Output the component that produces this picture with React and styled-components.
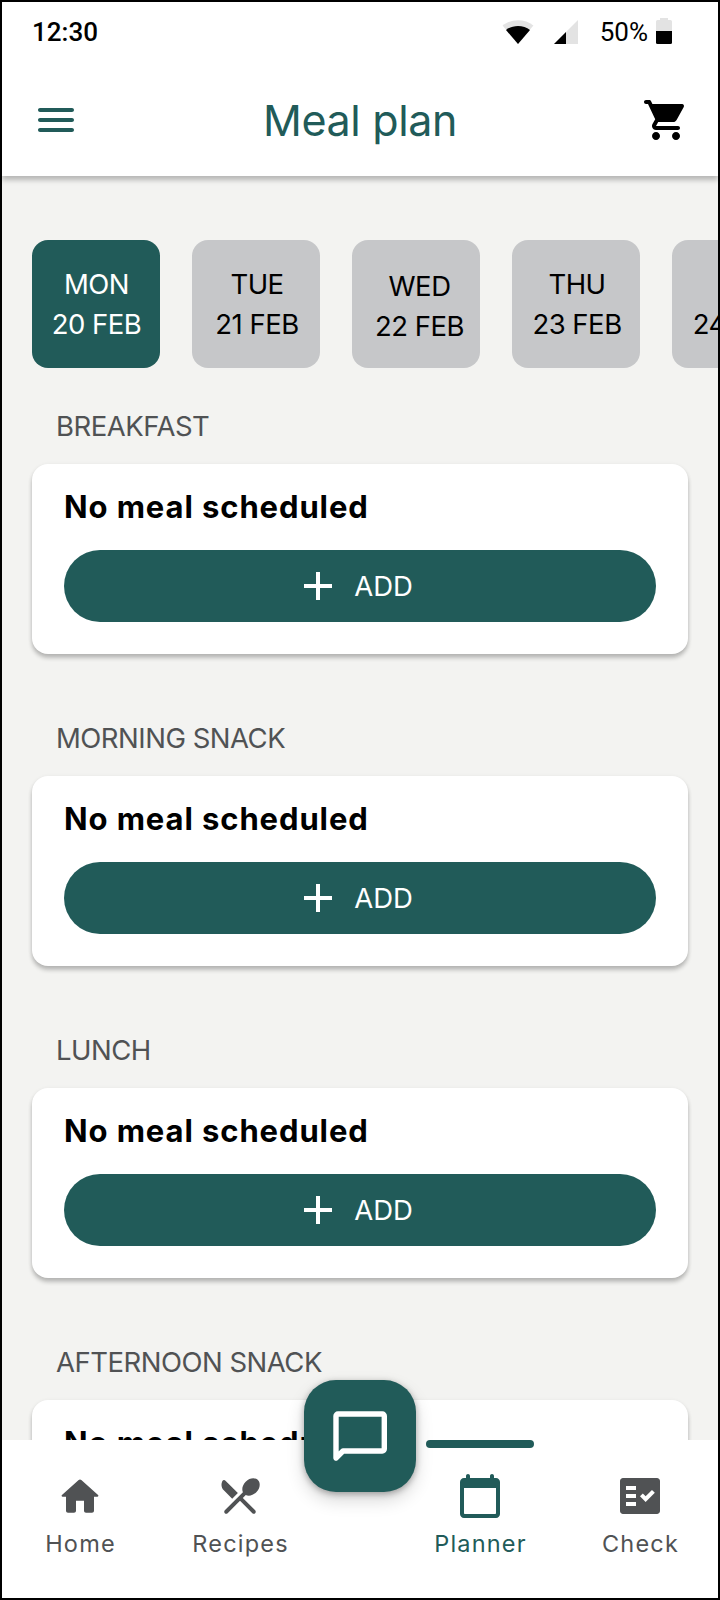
import React from 'react';
import styled, { createGlobalStyle } from 'styled-components';

const GREEN = '#215b59';
const GREY = '#505254';

const GlobalStyle = createGlobalStyle`
    body {
        margin: 0;
    }
    * {
        box-sizing: border-box;
    }
`;

const Phone = styled.div`
    width: 720px;
    height: 1600px;
    border: 2px solid #000;
    display: flex;
    flex-direction: column;
    overflow: hidden;
    background-color: #f3f3f1;
    font-family: Inter, "Liberation Sans", sans-serif;
`;

const Header = styled.header`
    height: 174px;
    flex: none;
    background-color: #fff;
    box-shadow: 0 4px 5px rgba(0, 0, 0, 0.25);
    z-index: 1;
`;

const StatusBar = styled.div`
    height: 60px;
    padding: 0 46px 0 30px;
    display: flex;
    align-items: center;
    font-family: Roboto, "Liberation Sans", sans-serif;
    font-size: 26px;
    line-height: 60px;
`;

const Clock = styled.span`
    font-weight: 500;
    margin-right: auto;
`;

const BatteryLevel = styled.span`
    margin: 0 8px 0 22px;
`;

const TitleBar = styled.div`
    height: 114px;
    padding: 2px 28px 0 30px;
    display: flex;
    align-items: center;
    justify-content: space-between;
`;

const Title = styled.h1`
    margin: 0;
    padding-right: 2px;
    font-size: 43px;
    font-weight: 400;
    line-height: 56px;
    letter-spacing: -0.35px;
    color: ${GREEN};
`;

const Icon = styled.svg`
    display: block;
    width: 48px;
    height: 48px;
    fill: ${p => p.$color || 'currentColor'};
`;

const StatusIcon = styled.svg`
    display: block;
    flex: none;
    margin-left: ${p => p.$gap || 0}px;
`;

const Content = styled.main`
    flex: none;
    height: 1264px;
    padding: 64px 30px 0;
    overflow: hidden;
`;

const Days = styled.div`
    display: flex;
    gap: 32px;
    margin-bottom: 39px;
`;

const Day = styled.button`
    flex: none;
    width: 128px;
    height: 128px;
    border: 0;
    border-radius: 16px;
    padding: ${p => p.$top || 0}px 0 0 ${p => p.$left || 0}px;
    background-color: ${p => (p.$active ? GREEN : '#c6c7c9')};
    color: ${p => (p.$active ? '#fff' : '#000')};
    font-family: inherit;
    font-size: 27.5px;
    line-height: 40px;
    letter-spacing: -0.5px;
    white-space: nowrap;
`;

const Meal = styled.section`
    margin-bottom: 65px;
`;

const MealName = styled.h2`
    margin: 0;
    padding: 0 0 19px 24px;
    font-size: 27.5px;
    font-weight: 400;
    line-height: 38px;
    letter-spacing: -0.5px;
    color: ${GREY};
`;

const Card = styled.div`
    height: 190px;
    padding: 22px 32px 32px;
    border-radius: 16px;
    background-color: #fff;
    box-shadow: 0 4px 4px rgba(0, 0, 0, 0.22), 0 1px 4px rgba(0, 0, 0, 0.08);
`;

const CardText = styled.p`
    margin: 0 0 22px;
    font-size: 31px;
    font-weight: 700;
    line-height: 42px;
    letter-spacing: 0.9px;
`;

const AddButton = styled.button`
    width: 100%;
    height: 72px;
    border: 0;
    border-radius: 36px;
    padding: 0 3px 0 0;
    background-color: ${GREEN};
    color: #fff;
    font-family: inherit;
    font-size: 27.5px;
    display: flex;
    align-items: center;
    justify-content: center;
    gap: 22px;
`;

const Nav = styled.nav`
    height: 158px;
    flex: none;
    z-index: 1;
    padding: 0 18px;
    background-color: #fff;
    display: flex;
    align-items: flex-start;
`;

const NavGroup = styled.div`
    display: flex;
    gap: 40px;
`;

const NavItem = styled.a`
    position: relative;
    width: 120px;
    padding-top: 32px;
    display: flex;
    flex-direction: column;
    align-items: center;
    gap: 8px;
    color: ${p => (p.$active ? GREEN : GREY)};
`;

const NavLabel = styled.span`
    padding-left: 1px;
    font-size: 23.5px;
    line-height: 32px;
    letter-spacing: 1.2px;
`;

const Indicator = styled.div`
    position: absolute;
    top: 0;
    left: 6px;
    width: 108px;
    height: 8px;
    border-radius: 4px;
    background-color: ${GREEN};
`;

const ChatButton = styled.button`
    flex: none;
    width: 112px;
    height: 112px;
    margin: -60px 4px 0;
    padding: 0;
    border: 0;
    border-radius: 32px;
    background-color: ${GREEN};
    box-shadow: 0 8px 18px rgba(0, 0, 0, 0.16), 0 2px 6px rgba(0, 0, 0, 0.3);
    display: flex;
    align-items: center;
    justify-content: center;
`;

const paths = {
    menu: 'M4 18h16c.55 0 1-.45 1-1s-.45-1-1-1H4c-.55 0-1 .45-1 1s.45 1 1 1zm0-5h16c.55 0 1-.45 1-1s-.45-1-1-1H4c-.55 0-1 .45-1 1s.45 1 1 1zM3 7c0 .55.45 1 1 1h16c.55 0 1-.45 1-1s-.45-1-1-1H4c-.55 0-1 .45-1 1z',
    cart: 'M7 18c-1.1 0-1.99.9-1.99 2S5.9 22 7 22s2-.9 2-2-.9-2-2-2zM1 3c0 .55.45 1 1 1h1l3.6 7.59-1.35 2.44C4.52 15.37 5.48 17 7 17h11c.55 0 1-.45 1-1s-.45-1-1-1H7l1.1-2h7.45c.75 0 1.41-.41 1.75-1.03l3.58-6.49c.37-.66-.11-1.48-.87-1.48H5.21l-.67-1.43c-.16-.35-.52-.57-.9-.57H2c-.55 0-1 .45-1 1zm16 15c-1.1 0-1.99.9-1.99 2s.89 2 1.99 2 2-.9 2-2-.9-2-2-2z',
    home: 'M10 19.4v-5h4v5c0 .55.45 1 1 1h3c.55 0 1-.45 1-1v-7h1.7c.46 0 .68-.57.33-.87L12.67 4c-.38-.34-.96-.34-1.34 0l-8.36 7.53c-.34.3-.13.87.33.87H5v7c0 .55.45 1 1 1h3c.55 0 1-.45 1-1z',
    recipes: 'M8.1 13.34l2.83-2.83-6.19-6.18c-.48-.48-1.31-.35-1.61.27-.71 1.49-.45 3.32.78 4.56l4.19 4.18zm6.78-1.81c1.53.71 3.68.21 5.27-1.38 1.91-1.91 2.28-4.65.81-6.12-1.46-1.46-4.2-1.1-6.12.81-1.59 1.59-2.09 3.74-1.38 5.27L4.4 19.17c-.39.39-.39 1.02 0 1.41.39.39 1.02.39 1.41 0L12 14.41l6.18 6.18c.39.39 1.02.39 1.41 0 .39-.39.39-1.02 0-1.41L13.41 13l1.47-1.47z',
    planner: 'M20 3h-1V2c0-.55-.45-1-1-1s-1 .45-1 1v1H7V2c0-.55-.45-1-1-1s-1 .45-1 1v1H4c-1.1 0-2 .9-2 2v16c0 1.1.9 2 2 2h16c1.1 0 2-.9 2-2V5c0-1.1-.9-2-2-2zm-.5 18h-15c-.3 0-.5-.2-.5-.5V8h16v12.500c0 .3-.2.5-.5.5z',
    check: 'M20.5 3h-17C2.7 3 2 3.7 2 4.5v15c0 .8.7 1.5 1.5 1.5h17c.8 0 1.5-.7 1.5-1.5v-15c0-.8-.7-1.5-1.5-1.5zM10 17H5v-2h5v2zm0-4H5v-2h5v2zm0-4H5V7h5v2zm4.82 6L12 12.16l1.41-1.41 1.41 1.42L17.99 9l1.42 1.42L14.82 15z',
};

const MaterialIcon = ({ name, color }) => (
    <Icon viewBox="0 0 24 24" $color={color}>
        <path d={paths[name]} />
    </Icon>
);

// the day texts are not all centred the same way
const days = [
    { day: 'MON', date: '20 FEB', active: true, left: 1 },
    { day: 'TUE', date: '21 FEB', left: 2 },
    { day: 'WED', date: '22 FEB', left: 7, top: 4 },
    { day: 'THU', date: '23 FEB', left: 2 },
    { day: 'FRI', date: '24 FEB', left: 3 },
];

const meals = ['BREAKFAST', 'MORNING SNACK', 'LUNCH', 'AFTERNOON SNACK'];

const NavLink = ({ name, label, active }) => (
    <NavItem $active={active}>
        {active && <Indicator />}
        <MaterialIcon name={name} />
        <NavLabel>{label}</NavLabel>
    </NavItem>
);

const MealCard = ({ name }) => (
    <Meal>
        <MealName>{name}</MealName>
        <Card>
            <CardText>No meal scheduled</CardText>
            <AddButton>
                <svg width="28" height="28" viewBox="0 0 28 28">
                    <path d="M14 0v28M0 14h28" stroke="#fff" strokeWidth="4" />
                </svg>
                ADD
            </AddButton>
        </Card>
    </Meal>
);

export default function App() {
    return (
        <Phone>
            <GlobalStyle />
            <Header>
                <StatusBar>
                    <Clock>12:30</Clock>
                    <StatusIcon width="32" height="24" viewBox="0 0 32 24">
                        <path d="M16 24L0.6 5.6C9 -1.7 23 -1.7 31.4 5.6z" fill="#e3e3e3" />
                        <path d="M16 24L4 10C10.500 4.700 21.500 4.700 28 10z" fill="#000" />
                    </StatusIcon>
                    <StatusIcon width="24" height="24" viewBox="0 0 24 24" $gap={20}>
                        <path d="M0 24L24 0v24z" fill="#e3e3e3" />
                        <path d="M0 24L12 12v12z" fill="#000" />
                    </StatusIcon>
                    <BatteryLevel>50%</BatteryLevel>
                    <StatusIcon width="16" height="28" viewBox="0 0 16 28">
                        <path d="M4 0h8v2h2.500a1.500 1.500 0 0 1 1.500 1.500V14H0V3.500A1.500 1.500 0 0 1 1.500 2H4z" fill="#e3e3e3" />
                        <path d="M0 13h16v11.500a1.500 1.500 0 0 1-1.500 1.500h-13A1.500 1.500 0 0 1 0 24.500z" fill="#000" />
                    </StatusIcon>
                </StatusBar>
                <TitleBar>
                    <MaterialIcon name="menu" color={GREEN} />
                    <Title>Meal plan</Title>
                    <MaterialIcon name="cart" color="#000" />
                </TitleBar>
            </Header>
            <Content>
                <Days>
                    {days.map(d => (
                        <Day key={d.day} $active={d.active} $left={d.left} $top={d.top}>
                            {d.day}
                            <br />
                            {d.date}
                        </Day>
                    ))}
                </Days>
                {meals.map(name => <MealCard key={name} name={name} />)}
            </Content>
            <Nav>
                <NavGroup>
                    <NavLink name="home" label="Home" />
                    <NavLink name="recipes" label="Recipes" />
                </NavGroup>
                <ChatButton>
                    <svg width="56" height="52" viewBox="0 0 56 52">
                        <path
                            d="M4 48V6a2 2 0 0 1 2-2h44.300a2 2 0 0 1 2 2v33a2 2 0 0 1-2 2H11z"
                            fill="none"
                            stroke="#fff"
                            strokeWidth="5.4"
                            strokeLinejoin="round"
                        />
                    </svg>
                </ChatButton>
                <NavGroup>
                    <NavLink name="planner" label="Planner" active />
                    <NavLink name="check" label="Check" />
                </NavGroup>
            </Nav>
        </Phone>
    );
}
